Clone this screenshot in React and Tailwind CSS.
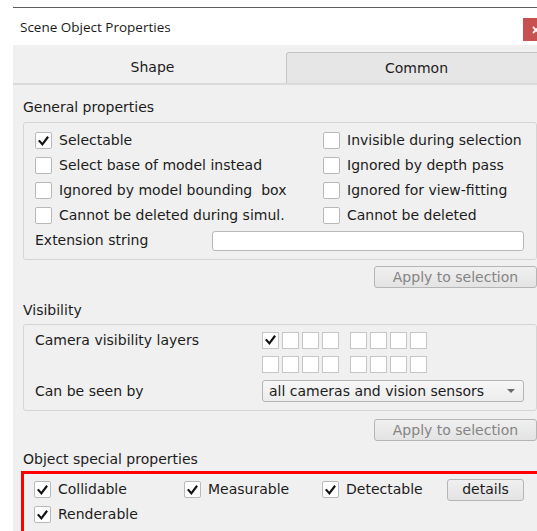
import { Fragment } from "react";

const uiFont = { fontFamily: '"DejaVu Sans", Verdana, sans-serif' };

function Check() {
  return (
    <svg viewBox="0 0 16 16" className="h-[16px] w-[16px]">
      <path d="M3.8 8.2 L6.8 11.6 L12.2 4.4" fill="none" stroke="#111" strokeWidth="2.3" strokeLinecap="square" />
    </svg>
  );
}

function CheckBox({ checked }) {
  return (
    <span className="flex h-[17px] w-[17px] flex-none items-center justify-center rounded-[2px] border border-[#b9b9b9] bg-white">
      {checked && <Check />}
    </span>
  );
}

function CheckItem({ checked, label, className = "" }) {
  return (
    <div className={`flex h-[25px] items-center gap-[7px] ${className}`}>
      <CheckBox checked={checked} />
      <span className="whitespace-pre">{label}</span>
    </div>
  );
}

function ApplyButton() {
  return (
    <div className="flex justify-end">
      <button
        type="button"
        className="h-[22px] w-[163px] rounded-[3px] border border-[#b5b5b5] bg-gradient-to-b from-[#f0f0f0] to-[#e3e3e3] text-[#848484]"
      >
        Apply to selection
      </button>
    </div>
  );
}

function LayerRow({ first }) {
  return (
    <div className="flex gap-[11px]">
      {[0, 1].map((g) => (
        <div key={g} className="flex gap-[3px]">
          {[0, 1, 2, 3].map((i) => (
            <span
              key={i}
              className="flex h-[17px] w-[17px] items-center justify-center border border-[#c6c6c6] bg-white"
            >
              {first && g === 0 && i === 0 && <Check />}
            </span>
          ))}
        </div>
      ))}
    </div>
  );
}

const general = [
  ["Selectable", true, "Invisible during selection"],
  ["Select base of model instead", false, "Ignored by depth pass"],
  ["Ignored by model bounding  box", false, "Ignored for view-fitting"],
  ["Cannot be deleted during simul.", false, "Cannot be deleted"],
];

export default function App() {
  return (
    <div className="h-[531px] w-[537px] overflow-hidden bg-white pl-[13px] pt-[7px]">
      <div
        className="w-[524px] overflow-hidden border-t border-[#5f5f5f] bg-[#f0f0f0] text-[14px] leading-[17px] text-[#1c1c1c]"
        style={uiFont}
      >
        <div className="flex h-[37px] items-start justify-between bg-white">
          <span className="pl-[7px] pt-[11px] text-[13.5px] leading-[16px] text-[#1a1a1a]" style={{ fontFamily: '"Open Sans", sans-serif' }}>
            Scene Object Properties
          </span>
          <span className="mt-[10px] flex h-[23px] w-[14px] items-center overflow-hidden bg-[#c75050] pl-[9px]">
            <svg viewBox="0 0 8 8" className="h-[8px] w-[8px] flex-none">
              <path d="M1 1 L7 7 M7 1 L1 7" stroke="#fff" strokeWidth="1.8" />
            </svg>
          </span>
        </div>

        <div className="flex h-[40px] items-end border-b-2 border-[#dadada]">
          <div className="flex h-[31px] w-[273px] flex-none items-center justify-center pl-[6px]">Shape</div>
          <div className="flex h-[31px] w-[261px] flex-none items-center justify-center rounded-tl-[3px] border border-b-0 border-[#c4c4c4] bg-[#e6e6e6]">
            Common
          </div>
        </div>

        <div className="pl-[10px]">
          <div className="mt-[14px]">General properties</div>
          <div className="mt-[6px] rounded-[3px] border border-[#d5d5d5] pb-[6px] pl-[11px] pr-[12px] pt-[5px]">
            <div className="grid grid-cols-[288px_1fr]">
              {general.map(([left, checked, right]) => (
                <Fragment key={left}>
                  <CheckItem checked={checked} label={left} />
                  <CheckItem checked={false} label={right} />
                </Fragment>
              ))}
            </div>
            <div className="flex h-[25px] items-center">
              <span className="w-[177px]">Extension string</span>
              <span className="h-[20px] flex-1 rounded-[3px] border border-[#b9b9b9] bg-white" />
            </div>
          </div>

          <div className="mt-[6px]">
            <ApplyButton />
          </div>

          <div className="mt-[14px]">Visibility</div>
          <div className="mt-[5px] rounded-[3px] border border-[#d5d5d5] pb-[8px] pl-[11px] pr-[12px] pt-[3px]">
            <div className="flex h-[24px] items-center">
              <span className="w-[227px]">Camera visibility layers</span>
              <LayerRow first />
            </div>
            <div className="flex h-[24px] items-center pl-[227px]">
              <LayerRow />
            </div>
            <div className="mt-[4px] flex h-[22px] items-center">
              <span className="w-[227px]">Can be seen by</span>
              <div className="flex h-[22px] flex-1 items-center justify-between rounded-[3px] border border-[#b5b5b5] bg-gradient-to-b from-[#f7f7f7] to-[#ececec] pl-[6px] pr-[8px]">
                <span>all cameras and vision sensors</span>
                <svg viewBox="0 0 8 4" className="h-[4px] w-[8px]">
                  <path d="M0 0 H8 L4 4 Z" fill="#6a6a6a" />
                </svg>
              </div>
            </div>
          </div>

          <div className="mt-[8px]">
            <ApplyButton />
          </div>

          <div className="mt-[10px]">Object special properties</div>
          <div className="-ml-[2px] -mr-[12px] mt-[3px] h-[90px] border-[3px] border-b-0 border-[#ff0000] pl-[10px] pt-[3px]">
            <div className="flex h-[25px] items-center">
              <CheckItem checked label="Collidable" className="w-[150px]" />
              <CheckItem checked label="Measurable" className="w-[138px]" />
              <CheckItem checked label="Detectable" className="w-[125px]" />
              <button
                type="button"
                className="h-[22px] w-[77px] rounded-[3px] border border-[#b5b5b5] bg-gradient-to-b from-[#f0f0f0] to-[#e3e3e3]"
              >
                details
              </button>
            </div>
            <CheckItem checked label="Renderable" />
          </div>
        </div>
      </div>
    </div>
  );
}
